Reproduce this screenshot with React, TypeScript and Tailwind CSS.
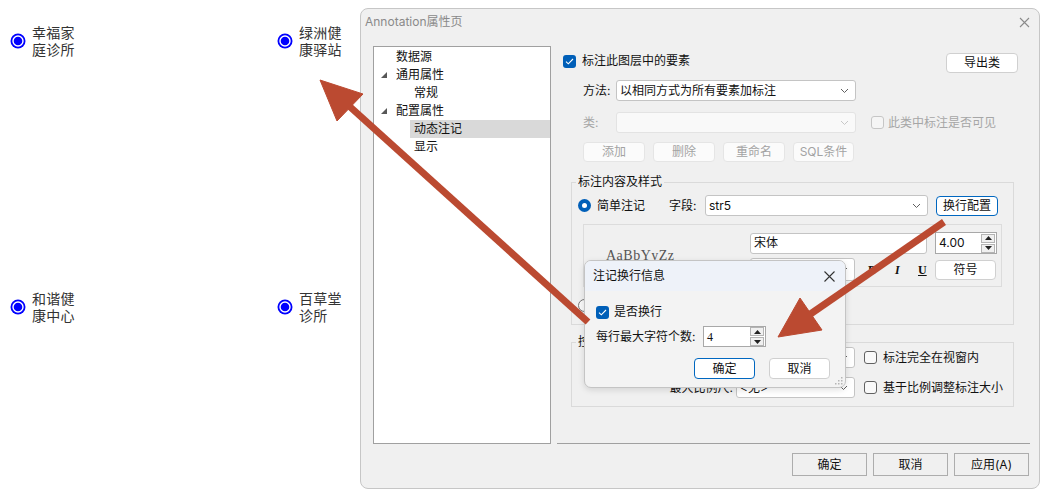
import React from "react";

function Chevron({ faint }: { faint?: boolean }) {
  return (
    <svg width="9" height="6" viewBox="0 0 9 6" className="shrink-0">
      <path d="M1 1l3.5 3.5L8 1" fill="none" stroke={faint ? "#c8c8c8" : "#5f5f5f"} strokeWidth="1" />
    </svg>
  );
}

function Combo({ className = "", text = "", disabled = false }: { className?: string; text?: string; disabled?: boolean }) {
  return (
    <div
      className={`flex items-center justify-between rounded-[3px] border pl-[3px] pr-[6px] ${
        disabled ? "border-[#e3e3e3] bg-[#f9f9f9]" : "border-[#c4c4c4] bg-white"
      } ${className}`}
    >
      <span className="truncate text-[12px] text-[#111]">{text}</span>
      <Chevron faint={disabled} />
    </div>
  );
}

function Check({ checked, disabled }: { checked?: boolean; disabled?: boolean }) {
  if (checked)
    return (
      <span className="flex h-[13px] w-[13px] shrink-0 items-center justify-center rounded-[3px] bg-[#005fb8]">
        <svg width="9" height="7" viewBox="0 0 9 7">
          <path d="M1 3.6l2.3 2.2L8 1" fill="none" stroke="white" strokeWidth="1.1" />
        </svg>
      </span>
    );
  return (
    <span
      className={`block h-[13px] w-[13px] shrink-0 rounded-[3px] border ${
        disabled ? "border-[#c6c6c6] bg-[#f5f5f5]" : "border-[#616161] bg-[#f9f9f9]"
      }`}
    />
  );
}

function Radio({ checked }: { checked?: boolean }) {
  if (checked)
    return (
      <span className="flex h-[13px] w-[13px] shrink-0 items-center justify-center rounded-full bg-[#005fb8]">
        <span className="h-[5px] w-[5px] rounded-full bg-white" />
      </span>
    );
  return <span className="block h-[13px] w-[13px] shrink-0 rounded-full border border-[#777] bg-[#f9f9f9]" />;
}

function Btn({ children, className = "", disabled, focus }: { children: React.ReactNode; className?: string; disabled?: boolean; focus?: boolean }) {
  return (
    <div
      className={`flex items-center justify-center rounded-[4px] border text-[12px] ${
        disabled
          ? "border-[#e5e5e5] bg-[#fbfbfb] text-[#a3a3a3]"
          : focus
          ? "border-[#0067c0] bg-white text-[#111]"
          : "border-[#d0d0d0] bg-white text-[#111]"
      } ${className}`}
    >
      {children}
    </div>
  );
}

function SpinArrows() {
  return (
    <div className="flex w-[14px] flex-col gap-px">
      <div className="flex h-[9px] items-center justify-center border border-[#b4b4b4] bg-[#f0f0f0]">
        <svg width="7" height="4" viewBox="0 0 7 4">
          <path d="M0 4L3.5 0L7 4z" fill="#222" />
        </svg>
      </div>
      <div className="flex h-[9px] items-center justify-center border border-[#b4b4b4] bg-[#f0f0f0]">
        <svg width="7" height="4" viewBox="0 0 7 4">
          <path d="M0 0L3.5 4L7 0z" fill="#222" />
        </svg>
      </div>
    </div>
  );
}

function Pin({ x, y, lines }: { x: string; y: string; lines: string[] }) {
  return (
    <div className={`absolute flex items-start gap-[6px] ${x} ${y}`}>
      <svg width="16" height="16" viewBox="0 0 16 16" className="mt-[9px]">
        <circle cx="8" cy="8" r="7.5" fill="#0000ff" />
        <circle cx="8" cy="8" r="5" fill="#0000ff" stroke="white" strokeWidth="1.4" />
      </svg>
      <div className="text-[14px] leading-[17px] tracking-[0.3px] text-[#333]">
        {lines.map((l) => (
          <div key={l}>{l}</div>
        ))}
      </div>
    </div>
  );
}

const tree = [
  { label: "数据源", depth: 0 },
  { label: "通用属性", depth: 0, open: true },
  { label: "常规", depth: 1 },
  { label: "配置属性", depth: 0, open: true },
  { label: "动态注记", depth: 1, selected: true },
  { label: "显示", depth: 1 },
];

export default function App() {
  return (
    <div className="relative h-[494px] w-[1046px] overflow-hidden bg-white font-['Inter','Noto_Sans_CJK_SC',sans-serif] text-[12px] text-[#111]">
      {/* map labels */}
      <Pin x="left-[10px]" y="top-[24px]" lines={["幸福家", "庭诊所"]} />
      <Pin x="left-[277px]" y="top-[24px]" lines={["绿洲健", "康驿站"]} />
      <Pin x="left-[10px]" y="top-[290px]" lines={["和谐健", "康中心"]} />
      <Pin x="left-[277px]" y="top-[290px]" lines={["百草堂", "诊所"]} />

      {/* property sheet window */}
      <div className="absolute left-[360px] top-[8px] flex h-[481px] w-[680px] flex-col rounded-[8px] border border-[#c6c6c6] bg-[#f0f0f0]">
        <div className="flex h-[26px] items-center justify-between pl-[4px] pr-[9px]">
          <span className="text-[12px] text-[#8a8a8a]">Annotation属性页</span>
          <svg width="11" height="11" viewBox="0 0 11 11">
            <path d="M1 1l9 9M10 1l-9 9" stroke="#8a8a8a" strokeWidth="1.1" />
          </svg>
        </div>

        <div className="mt-[11px] flex pl-[12px]">
          {/* tree */}
          <div className="h-[398px] w-[178px] border border-[#a0a0a0] bg-white pt-px">
            {tree.map((t) => (
              <div key={t.label} className="flex h-[18px] items-center">
                <span className="flex w-[22px] shrink-0 justify-end pr-[9px]">
                  {t.open && (
                    <svg width="6" height="6" viewBox="0 0 6 6">
                      <path d="M6 0V6H0z" fill="#575757" />
                    </svg>
                  )}
                </span>
                {t.depth === 1 ? (
                  <span className={`ml-[14px] flex h-[18px] flex-1 items-center pl-[4px] ${t.selected ? "bg-[#d9d9d9]" : ""}`}>{t.label}</span>
                ) : (
                  <span>{t.label}</span>
                )}
              </div>
            ))}
          </div>

          {/* right panel */}
          <div className="ml-[6px] flex h-[398px] w-[473px] flex-col border-b border-[#a0a0a0]">
            <div className="mt-[7px] flex items-start pl-[6px]">
              <div className="flex h-[16px] items-center gap-[6px]">
                <Check checked />
                <span>标注此图层中的要素</span>
              </div>
              <Btn className="ml-auto mr-[12px] h-[20px] w-[72px]">导出类</Btn>
            </div>

            <div className="mt-[7px] flex h-[21px] items-center pl-[26px]">
              <span className="w-[33px]">方法:</span>
              <Combo className="h-[21px] w-[240px]" text="以相同方式为所有要素加标注" />
            </div>

            <div className="mt-[11px] flex h-[21px] items-center pl-[26px]">
              <span className="w-[33px] text-[#a6a6a6]">类:</span>
              <Combo className="h-[21px] w-[240px]" disabled />
              <span className="ml-[15px] flex">
                <Check disabled />
              </span>
              <span className="ml-[4px] text-[#a6a6a6]">此类中标注是否可见</span>
            </div>

            <div className="mt-[9px] flex h-[20px] gap-[8px] pl-[26px]">
              <Btn disabled className="w-[62px]">添加</Btn>
              <Btn disabled className="w-[62px]">删除</Btn>
              <Btn disabled className="w-[62px]">重命名</Btn>
              <Btn disabled className="w-[61px]">SQL条件</Btn>
            </div>

            {/* label content & style */}
            <fieldset className="ml-[14px] mt-[12px] h-[151px] w-[443px] border border-[#dadada]">
              <legend className="ml-[4px] px-[2px] leading-[16px]">标注内容及样式</legend>
              <div className="mt-[5px] flex h-[21px] items-center pl-[6px]">
                <Radio checked />
                <span className="ml-[6px] w-[72px]">简单注记</span>
                <span className="w-[36px]">字段:</span>
                <Combo className="h-[21px] w-[223px]" text="str5" />
                <Btn focus className="ml-[8px] h-[20px] w-[62px]">换行配置</Btn>
              </div>

              <div className="ml-[11px] mt-[8px] flex h-[63px] w-[419px] border border-[#dcdcdc]">
                <div className="w-[166px] pl-[22px] pt-[23px] font-['Liberation_Serif',serif] text-[14px] leading-[16px] tracking-[0.5px] text-[#555]">
                  AaBbYyZz
                </div>
                <div className="flex flex-col">
                  <div className="mt-[7px] flex items-center">
                    <Combo className="h-[21px] w-[177px]" text="宋体" />
                    <div className="ml-[8px] flex h-[22px] w-[62px] items-center justify-between border border-[#a8a8a8] bg-white pl-[3px] pr-px">
                      <span>4.00</span>
                      <SpinArrows />
                    </div>
                  </div>
                  <div className="mt-[4px] flex items-center">
                    <Combo className="h-[23px] w-[105px]" text="8" />
                    <span className="ml-[13px] w-[27px] font-['Liberation_Serif',serif] text-[12px] font-bold">B</span>
                    <span className="w-[23px] font-['Liberation_Serif',serif] text-[12px] font-bold italic">I</span>
                    <span className="w-[17px] font-['Liberation_Serif',serif] text-[12px] font-bold underline">U</span>
                    <Btn className="h-[20px] w-[61px]">符号</Btn>
                  </div>
                </div>
              </div>

              <div className="mt-[11px] flex h-[14px] items-center pl-[6px]">
                <Radio />
                <span className="ml-[6px]">高级注记</span>
              </div>
            </fieldset>

            {/* scale range */}
            <fieldset className="ml-[14px] mt-[9px] h-[73px] w-[443px] border border-[#dadada]">
              <legend className="ml-[4px] px-[2px] leading-[16px]">控制比例尺范围</legend>
              <div className="-mt-[3px] flex h-[21px] items-center">
                <span className="w-[164px] pr-[3px] text-right">最小比例尺:</span>
                <Combo className="h-[21px] w-[119px]" text="<无>" />
                <span className="ml-[9px] flex">
                  <Check />
                </span>
                <span className="ml-[6px]">标注完全在视窗内</span>
              </div>
              <div className="mt-[9px] flex h-[21px] items-center">
                <span className="w-[164px] pr-[3px] text-right">最大比例尺:</span>
                <Combo className="h-[21px] w-[119px]" text="<无>" />
                <span className="ml-[9px] flex">
                  <Check />
                </span>
                <span className="ml-[6px]">基于比例调整标注大小</span>
              </div>
            </fieldset>
          </div>
        </div>

        <div className="mt-[9px] flex justify-end gap-[6px] pr-[10px]">
          {["确定", "取消", "应用(A)"].map((b) => (
            <div key={b} className="flex h-[23px] w-[75px] items-center justify-center border border-[#adadad] bg-[#f0f0f0] text-[12px]">
              {b}
            </div>
          ))}
        </div>
      </div>

      {/* wrap settings dialog */}
      <div className="absolute left-[584px] top-[260px] flex h-[128px] w-[262px] flex-col overflow-hidden rounded-[7px] border border-[#c4c4c4] bg-[#f3f3f3] shadow-[0_2px_6px_rgba(0,0,0,0.12)]">
        <div className="flex h-[30px] items-center justify-between bg-[#eef2f9] pl-[8px] pr-[10px]">
          <span>注记换行信息</span>
          <svg width="11" height="11" viewBox="0 0 11 11">
            <path d="M0.5 0.5l10 10M10.5 0.5l-10 10" stroke="#333" strokeWidth="1.1" />
          </svg>
        </div>
        <div className="mt-[14px] flex h-[14px] items-center pl-[11px]">
          <Check checked />
          <span className="ml-[5px]">是否换行</span>
        </div>
        <div className="mt-[7px] flex h-[21px] items-center pl-[11px]">
          <span className="w-[107px]">每行最大字符个数:</span>
          <div className="flex h-[21px] w-[63px] items-center justify-between border border-[#a8a8a8] bg-white pl-[3px] pr-px font-['Liberation_Serif',serif]">
            <span>4</span>
            <SpinArrows />
          </div>
        </div>
        <div className="mt-[11px] flex justify-end gap-[14px] pr-[15px]">
          <Btn focus className="h-[21px] w-[61px]">确定</Btn>
          <Btn className="h-[21px] w-[61px]">取消</Btn>
        </div>
        <svg className="absolute bottom-[2px] right-[2px]" width="8" height="8" viewBox="0 0 8 8">
          <g fill="#b5b5b5">
            <rect x="6" y="0" width="1.5" height="1.5" />
            <rect x="3" y="3" width="1.5" height="1.5" />
            <rect x="6" y="3" width="1.5" height="1.5" />
            <rect x="0" y="6" width="1.5" height="1.5" />
            <rect x="3" y="6" width="1.5" height="1.5" />
            <rect x="6" y="6" width="1.5" height="1.5" />
          </g>
        </svg>
      </div>

      {/* callout arrows */}
      <svg className="pointer-events-none absolute inset-0" width="1046" height="494" viewBox="0 0 1046 494">
        <g fill="#bb4a31" stroke="#bb4a31">
          <line x1="588" y1="322" x2="348" y2="105" strokeWidth="7" />
          <polygon points="320,80 363,94 337,121" strokeWidth="1" />
          <line x1="944" y1="222" x2="809" y2="315" strokeWidth="7" />
          <polygon points="778,337 800,298 822,330" strokeWidth="1" />
        </g>
      </svg>
    </div>
  );
}
